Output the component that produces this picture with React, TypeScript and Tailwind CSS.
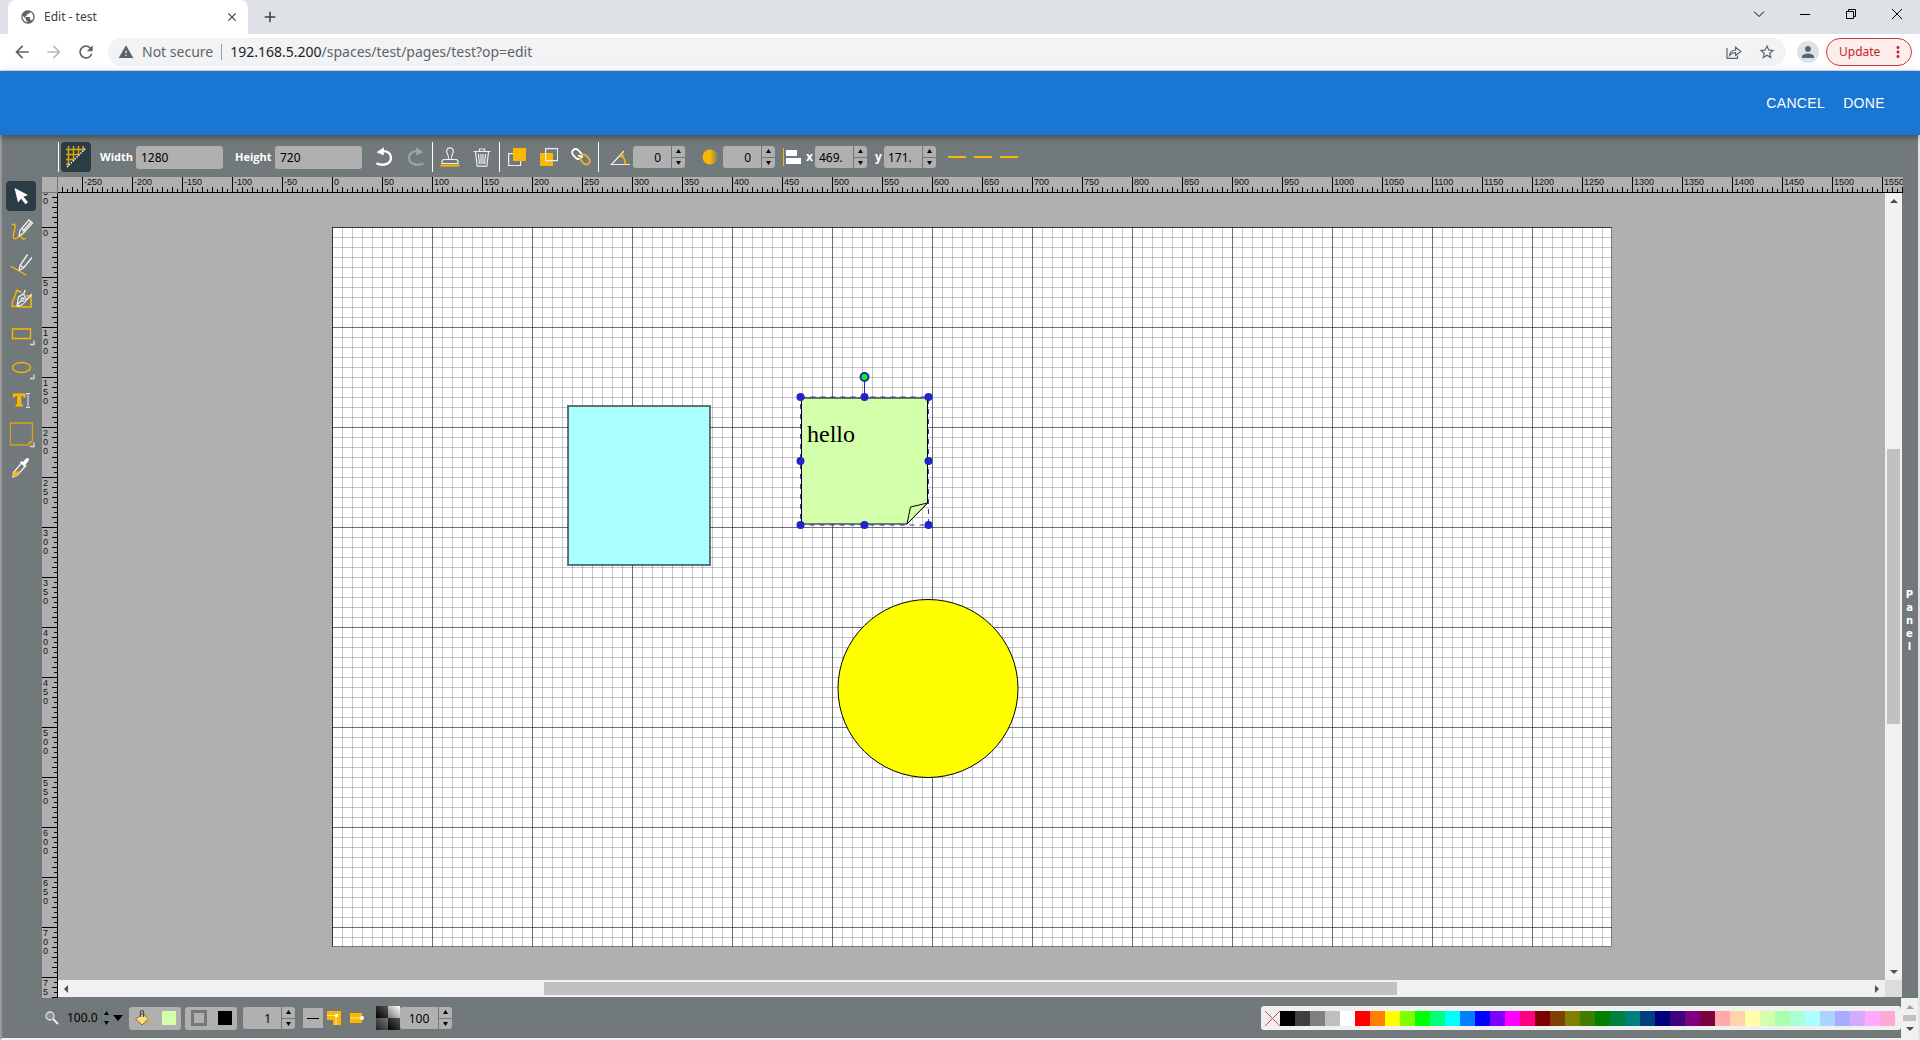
import React from "react";
import clsx from "clsx";
import { MdArrowBack, MdArrowForward, MdRefresh, MdWarning, MdStarBorder, MdPerson, MdPublic, MdAdd, MdClose, MdMoreVert } from "react-icons/md";

const PALETTE = [
  "bg-[#000000]", "bg-[#3f3f3f]", "bg-[#7f7f7f]", "bg-[#bfbfbf]", "bg-[#ffffff]",
  "bg-[#ff0000]", "bg-[#ff7f00]", "bg-[#ffff00]", "bg-[#7fff00]", "bg-[#00ff00]",
  "bg-[#00ff7f]", "bg-[#00ffff]", "bg-[#007fff]", "bg-[#0000ff]", "bg-[#7f00ff]",
  "bg-[#ff00ff]", "bg-[#ff007f]", "bg-[#7f0000]", "bg-[#7f3f00]", "bg-[#7f7f00]",
  "bg-[#3f7f00]", "bg-[#007f00]", "bg-[#007f3f]", "bg-[#007f7f]", "bg-[#003f7f]",
  "bg-[#00007f]", "bg-[#3f007f]", "bg-[#7f007f]", "bg-[#7f003f]", "bg-[#ffaaaa]",
  "bg-[#ffd4aa]", "bg-[#ffffaa]", "bg-[#d4ffaa]", "bg-[#aaffaa]", "bg-[#aaffd4]",
  "bg-[#aaffff]", "bg-[#aad4ff]", "bg-[#aaaaff]", "bg-[#d4aaff]", "bg-[#ffaaff]",
  "bg-[#ffaad4]",
];

// where canvas 0,0 sits inside the work area
const ORIGIN_X = 274;
const ORIGIN_Y = 34;

const range = (from: number, to: number, step: number) => {
  const out: number[] = [];
  for (let v = from; v <= to; v += step) out.push(v);
  return out;
};

function BrowserChrome() {
  return (
    <div className="shrink-0 font-['Noto_Sans',sans-serif]">
      <div className="flex h-[34px] items-stretch bg-[#dee1e6] pl-2">
        <div className="flex w-[240px] items-center rounded-t-lg bg-white pl-3 pr-2">
          <MdPublic className="size-4 text-[#5f6368]" />
          <span className="ml-2 flex-1 text-xs text-[#3c4043]">Edit - test</span>
          <button aria-label="Close tab" className="flex size-4 items-center justify-center text-[#3c4043]">
            <MdClose className="size-3.5" />
          </button>
        </div>
        <button aria-label="New tab" className="ml-3 flex w-5 items-center justify-center text-[#3c4043]">
          <MdAdd className="size-[18px]" />
        </button>
        <div className="ml-auto flex h-7 text-black">
          <button aria-label="Search tabs" className="flex w-[46px] items-center justify-center">
            <svg width="12" height="12" viewBox="0 0 12 12" fill="none" stroke="currentColor"><path d="M1 3.5l5 5 5-5" /></svg>
          </button>
          <button aria-label="Minimize" className="flex w-[46px] items-center justify-center">
            <svg width="10" height="10" viewBox="0 0 10 10" stroke="currentColor"><path d="M0 5.5h10" /></svg>
          </button>
          <button aria-label="Restore" className="flex w-[46px] items-center justify-center">
            <svg width="10" height="10" viewBox="0 0 10 10" fill="none" stroke="currentColor"><path d="M.5 2.5h7v7h-7zM2.5 2.5v-2h7v7h-2" /></svg>
          </button>
          <button aria-label="Close" className="flex w-[46px] items-center justify-center">
            <svg width="10" height="10" viewBox="0 0 10 10" stroke="currentColor"><path d="M0 0l10 10M10 0L0 10" /></svg>
          </button>
        </div>
      </div>
      <div className="flex h-[37px] items-center border-b border-[#dadce0] bg-white pl-3 pr-2 text-[#5f6368]">
        <button aria-label="Back"><MdArrowBack className="size-5" /></button>
        <button aria-label="Forward" className="ml-3 text-[#babcbe]"><MdArrowForward className="size-5" /></button>
        <button aria-label="Reload" className="ml-3"><MdRefresh className="size-5" /></button>
        <div className="ml-3 flex h-7 flex-1 items-center rounded-full bg-[#f1f3f4] px-2.5 text-sm">
          <MdWarning className="size-4" />
          <span className="ml-2">Not secure</span>
          <span className="mx-2 h-4 w-px bg-[#9aa0a6]" />
          <span className="text-[#202124]">192.168.5.200<span className="text-[#5f6368]">/spaces/test/pages/test?op=edit</span></span>
          <button aria-label="Share" className="ml-auto">
            <svg width="16" height="16" viewBox="0 0 16 16" fill="none" stroke="currentColor" strokeWidth="1.2">
              <path d="M1 4v10.4h10.5v-3" />
              <path d="M3.6 11.4c.3-3.4 2.3-5.2 6-5.4V3.2L14.8 7.4 9.6 11.4V8.7c-2.8 0-4.6.8-6 2.7z" />
            </svg>
          </button>
          <button aria-label="Bookmark this tab" className="ml-4"><MdStarBorder className="size-[18px]" /></button>
        </div>
        <button aria-label="Profile" className="ml-[11px] flex size-[22px] items-center justify-center rounded-full bg-[#dee1e6] text-[#5a6478]">
          <MdPerson className="size-[18px]" />
        </button>
        <button className="ml-[7px] flex h-7 w-[86px] items-center rounded-full border border-[#d33a35] bg-[#fceeed] pl-3 text-xs text-[#c5221f]">
          Update
          <MdMoreVert className="ml-auto mr-1 size-[18px]" />
        </button>
      </div>
    </div>
  );
}

function Header() {
  return (
    <header className="relative z-10 flex h-16 shrink-0 items-center justify-end gap-[18px] bg-[#1976d2] pr-[35px] font-['Liberation_Sans',sans-serif] text-sm font-medium tracking-wide text-white shadow-[0_2px_4px_-1px_rgba(0,0,0,.2),0_4px_5px_rgba(0,0,0,.14),0_1px_10px_rgba(0,0,0,.12)]">
      <button>CANCEL</button>
      <button>DONE</button>
    </header>
  );
}

interface SpinInputProps {
  id: string;
  value: string;
  align?: "left" | "right" | "center";
  className?: string;
}

function SpinInput({ id, value, align = "right", className }: SpinInputProps) {
  return (
    <div className={clsx("flex h-[22px] w-[52px] overflow-hidden rounded-[3px] bg-[#b0b0b0]", className)}>
      <input
        id={id}
        aria-label={id}
        defaultValue={value}
        className={clsx(
          "w-[38px] min-w-0 pt-px text-xs text-black outline-none",
          align === "right" && "pr-2.5 text-right",
          align === "center" && "text-center",
          align === "left" && "pl-1"
        )}
      />
      <Stepper className="w-3.5 border-l border-[#72797a]" />
    </div>
  );
}

function Stepper({ className }: { className?: string }) {
  return (
    <div className={clsx("flex flex-col", className)}>
      <button aria-label="Increase" className="flex flex-1 items-center justify-center border-b border-[#72797a]">
        <svg width="5" height="4" viewBox="0 0 5 4"><path d="M2.5 0L5 4H0z" /></svg>
      </button>
      <button aria-label="Decrease" className="flex flex-1 items-center justify-center">
        <svg width="5" height="4" viewBox="0 0 5 4"><path d="M0 0h5L2.5 4z" /></svg>
      </button>
    </div>
  );
}

function Divider({ className }: { className?: string }) {
  return <span className={clsx("h-[30px] w-px bg-white", className)} />;
}

function IconButton({ label, className, children }: { label: string; className?: string; children: React.ReactNode }) {
  return (
    <button aria-label={label} className={clsx("flex h-[30px] w-8 items-center justify-center", className)}>
      {children}
    </button>
  );
}

function TopToolbar() {
  return (
    <div className="flex h-[42px] shrink-0 items-center pl-14 pt-0.5 text-[11px] font-bold text-white">
      <Divider />
      <button aria-label="Show grid" className="ml-0.5 flex size-[30px] items-center justify-center rounded bg-[#2b3c45]">
        <svg width="22" height="22" viewBox="0 0 22 22" fill="none">
          <path d="M3.5 0v20M8.5 0v15M13.5 0v10M18 0v5M1 3.5h19M1 8.5h13M1 13.5h8M1 18h3" stroke="#d9a514" strokeWidth="1.5" />
          <path d="M2 21L21 2" stroke="#fff" strokeWidth="1.3" strokeDasharray="1.5 1.2" />
        </svg>
      </button>
      <label htmlFor="width" className="ml-[9px] w-9 font-['Open_Sans',sans-serif]">Width</label>
      <input id="width" defaultValue="1280" className="h-[23px] w-[87px] rounded-[3px] bg-[#b0b0b0] pl-[5px] text-xs font-normal text-black outline-none" />
      <label htmlFor="height" className="ml-3 w-10 font-['Open_Sans',sans-serif]">Height</label>
      <input id="height" defaultValue="720" className="h-[23px] w-[87px] rounded-[3px] bg-[#b0b0b0] pl-[5px] text-xs font-normal text-black outline-none" />
      <IconButton label="Undo" className="ml-1.5">
        <svg width="18" height="20" viewBox="0 0 18 20" fill="none">
          <path d="M7 4.2c5.500-.5 9 2.300 9 6.500 0 5.500-6.500 9-14.500 5.700" stroke="#fff" strokeWidth="2.400" />
          <path d="M1.500 5.300L9 .3l-.3 8z" fill="#fff" />
        </svg>
      </IconButton>
      <IconButton label="Redo" className="opacity-40">
        <svg width="18" height="20" viewBox="0 0 18 20" fill="none">
          <path d="M11 4.200C5.500 3.700 2 6.500 2 10.700c0 5.500 6.500 9 14.500 5.700" stroke="#ddd" strokeWidth="2.400" />
          <path d="M16.500 5.300L9 .3l.3 8z" fill="#ddd" />
        </svg>
      </IconButton>
      <Divider />
      <IconButton label="Clone" className="ml-px">
        <svg width="20" height="20" viewBox="0 0 20 20" fill="none" stroke="#eee" strokeWidth="1.200">
          <path d="M8.300 12.500c.5-2.500.2-4-.8-5.500C5.600 3.800 7 .8 10 .8s4.400 3 2.500 6.200c-1 1.500-1.300 3-.8 5.500" />
          <path d="M2 16.500v-2.800l1.500-1.200h13l1.500 1.200v2.800z" />
          <path d="M.5 18.500h19" stroke="#fcb800" strokeWidth="2" />
        </svg>
      </IconButton>
      <IconButton label="Delete">
        <svg width="18" height="19" viewBox="0 0 18 19" fill="none" stroke="#eee" strokeWidth="1.200">
          <path d="M.5 3.500h17M6.500 3V1h5v2M2.500 4l1.700 14.200h9.600L15.500 4M5.500 6l.9 10M8 6v10M10 6v10M12.500 6l-.9 10" />
        </svg>
      </IconButton>
      <Divider className="ml-px" />
      <IconButton label="Bring to front" className="ml-px">
        <svg width="18" height="18" viewBox="0 0 18 18" fill="none">
          <path d="M.6 5.600h12v12h-12z" stroke="#eee" strokeWidth="1.200" />
          <path d="M5 0h13v13H5z" fill="#fcb800" />
        </svg>
      </IconButton>
      <IconButton label="Send to back">
        <svg width="18" height="18" viewBox="0 0 18 18" fill="none">
          <path d="M0 5h13v13H0z" fill="#fcb800" />
          <path d="M5.600.6h12v12h-12z" stroke="#eee" strokeWidth="1.200" />
        </svg>
      </IconButton>
      <IconButton label="Make link">
        <svg width="20" height="18" viewBox="0 0 20 18" fill="none" strokeWidth="1.800">
          <rect x="-5.500" y="-3.500" width="11" height="7" rx="3.500" transform="translate(6 6) rotate(48)" stroke="#fff" />
          <rect x="-5.500" y="-3.500" width="11" height="7" rx="3.500" transform="translate(14 11.500) rotate(48)" stroke="#e9b22a" />
          <path d="M7 7.500l5 1.500" stroke="#fff" />
        </svg>
      </IconButton>
      <Divider className="ml-px" />
      <label htmlFor="angle" className="ml-[11px] w-[23px]">
        <svg width="20" height="20" viewBox="0 0 20 20" fill="none">
          <path d="M14 4L1.500 17.500H20" stroke="#eee" strokeWidth="1.200" />
          <path d="M10.500 8.500c3 1 4.800 4 5 9" stroke="#fcb800" strokeWidth="1.600" />
          <path d="M9.500 7.500l5 .3-3 3.500z" fill="#fcb800" />
        </svg>
      </label>
      <SpinInput id="angle" value="0" className="font-normal" />
      <label htmlFor="blur" className="ml-[17px] w-[21px]">
        <svg width="17" height="16" viewBox="0 0 17 16">
          <defs>
            <linearGradient id="blurFade">
              <stop offset=".5" stopColor="#fcb800" />
              <stop offset="1" stopColor="#fcb800" stopOpacity=".15" />
            </linearGradient>
          </defs>
          <circle cx="8" cy="8" r="7.500" fill="url(#blurFade)" />
        </svg>
      </label>
      <SpinInput id="blur" value="0" className="font-normal" />
      <button aria-label="Align" className="ml-2 w-[18px]">
        <svg width="18" height="18" viewBox="0 0 18 18">
          <path d="M0 0h1v18H0z" fill="#fcb800" />
          <path d="M3 2h11v6H3zM3 10h15v6H3z" fill="#fff" />
        </svg>
      </button>
      <label htmlFor="x" className="ml-[5px] w-[9px] text-xs">x</label>
      <SpinInput id="x" value="469." align="left" className="font-normal" />
      <label htmlFor="y" className="ml-2 w-[9px] text-xs">y</label>
      <SpinInput id="y" value="171." align="left" className="font-normal" />
      <div className="ml-3 flex gap-2">
        {["Start marker", "Mid marker", "End marker"].map((label) => (
          <button key={label} aria-label={label} className="flex h-5 w-[18px] items-center">
            <span className="h-0.5 w-full bg-[#fcb800]" />
          </button>
        ))}
      </div>
    </div>
  );
}

const Flyout = () => <path d="M24 27.500h4v-4" stroke="#ddd" strokeWidth="1.300" />;

const TOOLS: { label: string; active?: boolean; icon: React.ReactNode }[] = [
  {
    label: "Select",
    active: true,
    icon: <path d="M8.500 7L22 14l-4.500 1.800 4.500 5.500-2.500 2-4.300-5.600L12 21.500z" fill="#fff" />,
  },
  {
    label: "Pencil",
    icon: (
      <>
        <path d="M6 10c3-2.500 4 .5 2.500 5-1.500 5-2 10 1.500 8.500s4-4 5-2.500 1 4.500 5 2.500" stroke="#fcb800" strokeWidth="1.300" />
        <path d="M13 21l1-5.500L23 5l3.500 3L17 18.500zM16 13.500l3.500 3M16.500 16.500L25 7" stroke="#eee" strokeWidth="1.300" />
      </>
    ),
  },
  {
    label: "Line",
    icon: (
      <>
        <path d="M4.500 17L20 26" stroke="#fcb800" strokeWidth="1.400" />
        <path d="M13 21.500l1-5L21.500 5.500M13 21.500l4.500-2.500L26 8.500M14 16l4 3" stroke="#eee" strokeWidth="1.400" />
      </>
    ),
  },
  {
    label: "Path",
    icon: (
      <>
        <path d="M10.500 7l5 2.500M20 13l5-.5v11.500c-7 .5-13-1-18.500-.5-2.500-5 3.500-8 4-16.500" stroke="#fcb800" strokeWidth="1.500" />
        <path d="M11 23l1.500-9 5.500-3.500 1-3.500M11 23c4 0 7-2 9-5.500L26 11M11 22l5-5M16.500 15a1.500 1.500 0 100 3 1.500 1.500 0 000-3M17.500 11l3 6" stroke="#eee" strokeWidth="1.300" />
      </>
    ),
  },
  {
    label: "Rectangle",
    icon: (
      <>
        <path d="M6.500 12h18v9.500h-18z" stroke="#fcb800" strokeWidth="1.300" />
        <Flyout />
      </>
    ),
  },
  {
    label: "Ellipse",
    icon: (
      <>
        <ellipse cx="15.500" cy="16.500" rx="9" ry="5" stroke="#fcb800" strokeWidth="1.300" />
        <Flyout />
      </>
    ),
  },
  {
    label: "Text",
    icon: (
      <>
        <text x="7" y="21" fill="#fcb800" stroke="#fcb800" className="font-['DejaVu_Serif',serif] text-base font-bold">T</text>
        <path d="M20 8.500h1.500l.5.500.5-.5H24M20 22.500h1.500l.5-.5.5.5H24M22 9v13" stroke="#eee" />
      </>
    ),
  },
  {
    label: "Shape library",
    icon: (
      <>
        <path d="M4.500 4h22v18l-4 4h-18zM22.500 26l1-3 3-1" stroke="#d6a11b" strokeWidth="1.300" />
        <Flyout />
      </>
    ),
  },
  {
    label: "Eye dropper",
    icon: (
      <>
        <path d="M16 9.500l-8.500 10L7 24l4-1.500 8.500-9.500" stroke="#eee" strokeWidth="1.300" />
        <path d="M9.500 18.500h5L10.500 23 7 24l.5-4z" fill="#fcb800" />
        <path d="M14 9.500l1.500-1.500 1.500 1 3-3.500c2-1.500 4 .5 2.500 2.500L19.500 11.500l1 1.500L19 14.500z" fill="#fff" />
      </>
    ),
  },
];

function LeftTools() {
  return (
    <div className="flex w-10 shrink-0 flex-col gap-1 pl-1 pt-1">
      {TOOLS.map((tool) => (
        <button key={tool.label} aria-label={tool.label} className={clsx("size-[30px] rounded", tool.active && "bg-[#2b3c45]")}>
          <svg width="30" height="30" viewBox="0 0 30 30" fill="none">{tool.icon}</svg>
        </button>
      ))}
    </div>
  );
}

function HorizontalRuler() {
  return (
    <svg className="h-4 w-full" shapeRendering="crispEdges">
      {range(-270, 1900, 5).map((v) => {
        const len = v % 50 === 0 ? 15 : v % 10 === 0 ? 5 : 3;
        return <rect key={v} x={ORIGIN_X + v} y={15 - len} width="1" height={len} />;
      })}
      {range(-250, 1550, 50).map((v) => (
        <text key={v} x={ORIGIN_X + v + 2} y="8" fill="#111" className="font-['Liberation_Sans',sans-serif] text-[9px]">{v}</text>
      ))}
      <rect y="15" width="100%" height="1" />
    </svg>
  );
}

function VerticalRuler() {
  return (
    <svg className="h-full w-4" shapeRendering="crispEdges">
      {range(-30, 1200, 5).map((v) => {
        const len = v % 50 === 0 ? 15 : v % 10 === 0 ? 5 : 3;
        return <rect key={v} x={15 - len} y={ORIGIN_Y + v} width={len} height="1" />;
      })}
      {range(-50, 750, 50).map((v) =>
        String(v).split("").map((digit, i) => {
          const y = ORIGIN_Y + v + 9 * (i + 1);
          if (y < 0) return null;
          return (
            <text key={`${v}-${i}`} x="1" y={y} fill="#111" className="font-['Liberation_Sans',sans-serif] text-[9px]">{digit}</text>
          );
        })
      )}
      <rect x="15" width="1" height="100%" />
    </svg>
  );
}

const GRIPS = [
  [468.5, 170], [532.5, 170], [596.5, 170],
  [468.5, 234], [596.5, 234],
  [468.5, 298], [532.5, 298], [596.5, 298],
];

function Drawing() {
  return (
    <svg width="1280" height="720" viewBox="0 0 1280 720" fill="none" className="absolute left-[274px] top-[34px] bg-white">
      <g shapeRendering="crispEdges">
        {range(0, 1270, 10).map((x) => (
          <rect key={`v${x}`} x={x} width="1" height="720" fill="#000" fillOpacity={x % 100 ? 0.22 : 0.55} />
        ))}
        {range(0, 710, 10).map((y) => (
          <rect key={`h${y}`} y={y} width="1280" height="1" fill="#000" fillOpacity={y % 100 ? 0.22 : 0.55} />
        ))}
        <rect x=".5" y=".5" width="1279" height="719" stroke="#000" strokeOpacity=".5" />
      </g>
      <rect x="236" y="179" width="142" height="159" fill="#aaffff" />
      <rect x="236" y="179" width="142" height="159" stroke="#000" strokeWidth="2" strokeOpacity=".55" />
      <ellipse cx="596" cy="461.500" rx="90" ry="89" fill="#ffff00" stroke="#000" />
      <path d="M469.500 171h126v105l-20.500 21H469.500z" fill="#d4ffaa" stroke="#000" />
      <path d="M595.500 276l-17 4-3.500 17z" fill="#d4ffaa" stroke="#000" />
      <text x="475" y="215" fill="#000" className="font-['Liberation_Serif',serif] text-2xl">hello</text>
      <path d="M468.500 170h128v128h-128z" stroke="#22c" strokeDasharray="5 5" strokeOpacity=".9" />
      <path d="M532.500 150v20" stroke="#22c" />
      {GRIPS.map(([x, y]) => (
        <circle key={`${x}-${y}`} cx={x} cy={y} r="4" fill="#22c" />
      ))}
      <circle cx="532.500" cy="150" r="4" fill="#0f0" stroke="#22c" strokeWidth="2" />
    </svg>
  );
}

type Direction = "up" | "down" | "left" | "right";

const ARROWS: Record<Direction, string> = {
  up: "M4 2l4 4H0z",
  down: "M0 2h8L4 6z",
  left: "M2 4l4-4v8z",
  right: "M6 4L2 0v8z",
};

function Arrow({ dir, className }: { dir: Direction; className?: string }) {
  return (
    <svg width="8" height="8" viewBox="0 0 8 8" className={clsx("shrink-0 fill-current", className)}>
      <path d={ARROWS[dir]} />
    </svg>
  );
}

function WorkArea() {
  return (
    <div className="grid min-w-0 flex-1 grid-cols-[16px_minmax(0,1fr)] grid-rows-[16px_minmax(0,1fr)] bg-[#b0b0b0]">
      <div className="border-b border-r border-[#777]" />
      <HorizontalRuler />
      <div className="relative min-h-0">
        <div className="absolute inset-0"><VerticalRuler /></div>
      </div>
      <div className="grid min-h-0 grid-cols-[minmax(0,1fr)_18px] grid-rows-[minmax(0,1fr)_18px]">
        <div className="relative overflow-hidden">
          <Drawing />
        </div>
        <div className="flex flex-col items-center border-r border-[#72797a] bg-[#f1f1f1] py-1 text-[#505050]">
          <Arrow dir="up" />
          <div className="w-[13px] flex-[244]" />
          <div className="w-[13px] flex-[274] bg-[#c1c1c1]" />
          <div className="w-[13px] flex-[244]" />
          <Arrow dir="down" />
        </div>
        <div className="flex items-center border-b border-[#72797a] bg-[#f1f1f1] px-1 text-[#505050]">
          <Arrow dir="left" />
          <div className="h-[13px] flex-[474]" />
          <div className="h-[13px] flex-[853] bg-[#c1c1c1]" />
          <div className="h-[13px] flex-[476]" />
          <Arrow dir="right" />
        </div>
        <div className="border-b border-r border-[#72797a] bg-[#dcdcdc]" />
      </div>
    </div>
  );
}

function BottomBar() {
  return (
    <div className="flex h-10 shrink-0 items-center pl-[43px]">
      <label htmlFor="zoom" className="w-5">
        <svg width="14" height="14" viewBox="0 0 14 14" fill="none">
          <circle cx="5" cy="5" r="4" stroke="#ddd" strokeWidth="1.300" fill="#8b9192" />
          <path d="M8 8l5 5" stroke="#eee" strokeWidth="2" />
        </svg>
      </label>
      <input id="zoom" defaultValue="100.0" className="w-9 pl-0.5 text-xs text-black outline-none" />
      <Stepper className="h-[18px] w-2.5 border-l border-[#666c6d]" />
      <button aria-label="Zoom presets" className="ml-0.5 w-3.5">
        <svg width="10" height="6" viewBox="0 0 10 6"><path d="M0 0h10L5 6z" /></svg>
      </button>
      <button aria-label="Fill color" className="ml-0.5 flex h-[23px] w-[52px] items-center gap-2.5 rounded-[3px] bg-[#b0b0b0] pl-[5px]">
        <svg width="18" height="18" viewBox="0 0 18 18" fill="none">
          <path d="M1.500 10L9 4.500l5.500 5.500L8 16z" fill="#fcd98a" stroke="#8a6a2c" />
          <path d="M6.500 8V3c0-2 3-2 3 0v5" stroke="#444" strokeWidth="1.200" />
          <path d="M12.500 8.500c3.500 0 4 1 3.500 8" stroke="#d9ab64" strokeWidth="1.800" />
        </svg>
        <span className="size-3.5 bg-[#d4ffaa]" />
      </button>
      <button aria-label="Stroke color" className="ml-1 flex h-[23px] w-[52px] items-center gap-[11px] rounded-[3px] bg-[#b0b0b0] pl-1.5">
        <span className="size-4 border-[3px] border-[#777]" />
        <span className="size-3.5 bg-black" />
      </button>
      <SpinInput id="stroke width" value="1" className="ml-1.5" />
      <button aria-label="Stroke style" className="ml-2 flex h-5 w-5 items-center justify-center bg-[#b0b0b0]">
        <span className="h-px w-3 bg-black" />
      </button>
      <button aria-label="Line join" className="ml-1 w-[14px]">
        <svg width="14" height="14" viewBox="0 0 14 14">
          <path d="M0 0h14v14H6V9H0z" fill="#fcb800" />
          <path d="M0 4.500h9v9.500" stroke="#ffe9a8" fill="none" />
          <path d="M8 3h3v3H8z" fill="#fff" />
        </svg>
      </button>
      <button aria-label="Line cap" className="ml-[9px] w-[14px]">
        <svg width="14" height="10" viewBox="0 0 14 10">
          <path d="M0 0h12v10H0z" fill="#fcb800" />
          <path d="M0 5h12" stroke="#ffe9a8" />
          <circle cx="12" cy="5" r="2" fill="#fff" />
        </svg>
      </button>
      <label htmlFor="opacity" className="ml-3">
        <svg width="24" height="24" viewBox="0 0 24 24">
          <defs>
            <linearGradient id="light" x1="0" y1="1" x2="1" y2="0">
              <stop stopColor="#777" />
              <stop offset="1" stopColor="#fff" />
            </linearGradient>
            <linearGradient id="mid" x1="0" y1="1" x2="1" y2="0">
              <stop stopColor="#222" />
              <stop offset="1" stopColor="#777" />
            </linearGradient>
            <linearGradient id="dark" x1="0" y1="1" x2="1" y2="0">
              <stop stopColor="#000" />
              <stop offset="1" stopColor="#555" />
            </linearGradient>
          </defs>
          <path d="M0 0h12v12H0z" fill="url(#dark)" />
          <path d="M12 0h12v12H12z" fill="url(#light)" />
          <path d="M0 12h12v12H0z" fill="url(#mid)" />
          <path d="M12 12h12v12H12z" fill="url(#dark)" />
        </svg>
      </label>
      <SpinInput id="opacity" value="100" align="center" />
      <div className="ml-auto flex h-6 items-center rounded-[3px] bg-[#f0f0f0] pl-1 pr-1.5">
        <button aria-label="No color" className="size-[15px]">
          <svg width="15" height="15" viewBox="0 0 15 15" stroke="#d44" fill="none"><path d="M0 0l15 15M15 0L0 15" /></svg>
        </button>
        {PALETTE.map((color) => (
          <button key={color} aria-label={color} className={clsx("size-[15px]", color)} />
        ))}
      </div>
      <div className="flex h-full w-[17px] flex-col items-center justify-between bg-[#f1f1f1] py-[5px]">
        <Arrow dir="up" className="text-[#a3a3a3]" />
        <div className="h-1.5 w-[13px] bg-[#c1c1c1]" />
        <Arrow dir="down" className="text-[#505050]" />
      </div>
    </div>
  );
}

function SidePanelHandle() {
  return (
    <button aria-label="Panel" className="flex w-[15px] shrink-0 flex-col items-center justify-center pr-0.5 pt-[66px] font-['DejaVu_Sans',sans-serif] text-[10px] font-bold leading-[13px] text-white">
      {"Panel".split("").map((letter, i) => (
        <span key={i}>{letter}</span>
      ))}
    </button>
  );
}

export default function App() {
  return (
    <div className="flex h-screen flex-col overflow-hidden">
      <BrowserChrome />
      <Header />
      <main className="flex min-h-0 flex-1 flex-col border-b-2 border-l-2 border-r-2 border-b-[#f0f0f0] border-l-[#999] border-r-[#e4e4e4] bg-[#72797a] font-['Noto_Sans',sans-serif]">
        <TopToolbar />
        <div className="flex min-h-0 flex-1">
          <LeftTools />
          <WorkArea />
          <SidePanelHandle />
        </div>
        <BottomBar />
      </main>
    </div>
  );
}
